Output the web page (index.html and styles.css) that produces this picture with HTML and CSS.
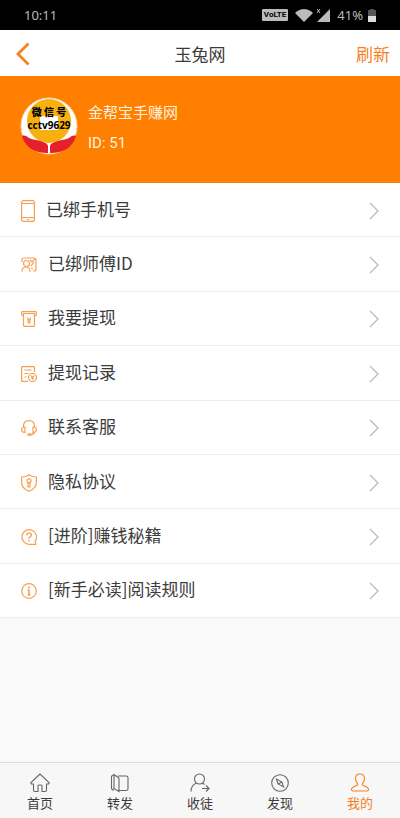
FILE: index.html
```html
<!DOCTYPE html>
<html lang="zh-CN">
<head>
<meta charset="utf-8">
<meta name="viewport" content="width=device-width, initial-scale=1">
<title>玉兔网</title>
<link rel="stylesheet" href="styles.css">
</head>
<body>
<div class="status">
  <span class="clock">10:11</span>
  <span class="volte">VoLTE</span>
  <svg class="wifi" width="18" height="13" viewBox="0 0 18 13"><path fill="currentColor" d="M0 4Q9-4 18 4L9 13Z"/></svg>
  <svg class="signal" width="14" height="14" viewBox="0 0 14 14"><path fill="currentColor" d="M14 1v13H1Z"/><path d="M1 1l3 4M4 1L1 5" fill="none" stroke="currentColor"/></svg>
  <span class="percent">41%</span>
  <svg width="8" height="13" viewBox="0 0 8 13"><path fill="#555" d="M2 0h4v1h2v6H0V1h2Z"/><path fill="#ddd" d="M0 7h8v6H0Z"/></svg>
</div>
<header class="header">
  <button class="back" type="button" aria-label="返回"><svg width="14" height="24" viewBox="0 0 14 24"><path d="M12.500 1.500L2 12l10.500 10.500" fill="none" stroke="currentColor" stroke-width="2.800"/></svg></button>
  <h1 class="title">玉兔网</h1>
  <button class="refresh" type="button">刷新</button>
</header>
<main class="main">
  <section class="profile">
    <svg class="avatar" width="58" height="58" viewBox="0 0 58 58">
      <circle cx="29" cy="29" r="28" fill="#fff" stroke="#ffd9ae"/>
      <circle cx="29" cy="24" r="22" fill="#f8b00c"/>
      <path fill="#fff" d="M20 19h18v14H20Z"/>
      <path fill="#e3202b" d="M2 39c2-1 5 0 7 2 4 2 10 2 14 4 2 1 4 1 5 4v7C14 56 5 50 2 39ZM56 39c-2-1-5 0-7 2-4 2-10 2-14 4-2 1-4 1-5 4v7c14 0 23-6 26-17Z"/>
      <text class="stamp" x="29" y="19" text-anchor="middle">微 信 号</text>
      <text class="wechat" x="29" y="32" text-anchor="middle">cctv9629</text>
    </svg>
    <div class="who">
      <p class="name">金帮宝手赚网</p>
      <p class="uid">ID: 51</p>
    </div>
  </section>
  <nav class="menu" aria-label="菜单">
    <a class="row" href="#phone"><svg class="icon" width="14" height="22" viewBox="0 0 14 22"><rect x=".6" y=".6" width="12.800" height="20.800" rx="2"/><path d="M1 3.500h12M1 17.500h12M6 19.500h2"/></svg><span class="label">已绑手机号</span><svg class="arrow" width="10" height="18" viewBox="0 0 10 18"><path d="M1 1l8 8-8 8"/></svg></a>
    <a class="row" href="#master"><svg class="icon" width="16" height="16" viewBox="0 0 16 16"><path d="M1 5V3q0-2 2-2h10q2 0 2 2v9q0 2-2 2h-1M1 14.500c0-3 1.500-4.500 4-4.500s4 1.500 4 5M9 3l2 2 3-3M10 9l3-4M10 11l2 1"/><circle cx="5.500" cy="6.500" r="3"/></svg><span class="label">已绑师傅ID</span><svg class="arrow" width="10" height="18" viewBox="0 0 10 18"><path d="M1 1l8 8-8 8"/></svg></a>
    <a class="row" href="#withdraw"><svg class="icon" width="16" height="16" viewBox="0 0 16 16"><path d="M2.500 4.500H1.500Q.6 4.500.6 3.500v-2Q.6.600 1.500.600h13q.9 0 .9.900v2q0 1-.9 1h-1M2.500 2.500h11v12q0 .9-.9.900H3.400q-.9 0-.9-.9ZM6 6.500l2 2.500 2-2.500M8 9v4M6 9h4M6 11h4"/></svg><span class="label">我要提现</span><svg class="arrow" width="10" height="18" viewBox="0 0 10 18"><path d="M1 1l8 8-8 8"/></svg></a>
    <a class="row" href="#records"><svg class="icon" width="16" height="16" viewBox="0 0 16 16"><path d="M13.500 6V1.500Q13.500.600 12.500.600h-11Q.6.600.6 1.500v13q0 .9.900.9H7M3.500 4h7M3.500 7.500h4M3.500 11h2"/><circle cx="11.500" cy="11.500" r="4"/><path d="M10 9.500l1.500 2 1.500-2M11.500 11.500v2.500M10 12h3"/></svg><span class="label">提现记录</span><svg class="arrow" width="10" height="18" viewBox="0 0 10 18"><path d="M1 1l8 8-8 8"/></svg></a>
    <a class="row" href="#service"><svg class="icon" width="16" height="16" viewBox="0 0 16 16"><path d="M2.500 7V6C2.500 2.500 5 .600 8 .600S13.500 2.500 13.500 6v1M4 7v5.500C2 12.500.6 11.500.6 9.800S2 7 4 7ZM12 7v5.500c2 0 3.400-1 3.400-2.700S14 7 12 7ZM13.500 12c-.5 1.800-2 2.500-3.500 2.500"/><ellipse cx="8.500" cy="14.500" rx="1.700" ry=".9"/></svg><span class="label">联系客服</span><svg class="arrow" width="10" height="18" viewBox="0 0 10 18"><path d="M1 1l8 8-8 8"/></svg></a>
    <a class="row" href="#privacy"><svg class="icon" width="16" height="18" viewBox="0 0 16 18"><path d="M8 .700C6 2.300 3.500 3 .700 3v6c0 4 3 6.500 7.300 8.300C12.300 15.500 15.300 13 15.300 9V3C12.500 3 10 2.300 8 .700ZM7 8.500h2v4.500H7Z"/><circle cx="8" cy="6.800" r="2"/></svg><span class="label">隐私协议</span><svg class="arrow" width="10" height="18" viewBox="0 0 10 18"><path d="M1 1l8 8-8 8"/></svg></a>
    <a class="row" href="#tips"><svg class="icon" width="16" height="16" viewBox="0 0 16 16"><path d="M14 12.500A7.300 7.300 0 1 0 8 15.300h6.500q.8 0 .4-.7Z"/><path d="M5.800 6.200C5.800 3 10.300 3.200 10.300 6c0 1.800-2.300 1.800-2.300 3.700M8 11v1.400" stroke-width="1.400"/></svg><span class="label">[进阶]赚钱秘籍</span><svg class="arrow" width="10" height="18" viewBox="0 0 10 18"><path d="M1 1l8 8-8 8"/></svg></a>
    <a class="row" href="#rules"><svg class="icon" width="16" height="16" viewBox="0 0 16 16"><circle cx="8" cy="8" r="7.300"/><path d="M8 3.500v2M6.500 7.200H8V12M6.500 12h3" stroke-width="1.500"/></svg><span class="label">[新手必读]阅读规则</span><svg class="arrow" width="10" height="18" viewBox="0 0 10 18"><path d="M1 1l8 8-8 8"/></svg></a>
  </nav>
</main>
<nav class="tabs" aria-label="主导航">
  <a class="tab" href="#home"><svg width="20" height="20" viewBox="0 0 20 20"><path d="M10 1L1 9.500q-.5 1.500 1 1.500h1.500v6q0 1.500 1.500 1.500h3V13q0-1 1-1h2q1 0 1 1v5.500h3q1.500 0 1.500-1.500v-6H18q1.500 0 1-1.500Z"/></svg>首页</a>
  <a class="tab" href="#share"><svg width="20" height="20" viewBox="0 0 20 20"><path d="M8 3h8q2 0 2 2v11q0 1.500-2 1.500H9M9 5v13.500L4 15.500V1.500L9 5M4 2Q1.500 2 1.500 4v11q0 2 2.500 2"/></svg>转发</a>
  <a class="tab" href="#invite"><svg width="20" height="20" viewBox="0 0 20 20"><circle cx="9.500" cy="6" r="5"/><path d="M1 18.500c0-4 2-7 5.500-8.500M12.500 10l2 1.500M12 15.500h7M16 12.500l3 3-3 3"/></svg>收徒</a>
  <a class="tab" href="#discover"><svg width="20" height="20" viewBox="0 0 20 20"><circle cx="10" cy="10" r="8.300"/><path d="M6.500 6L8 11l5.500 3L12 9ZM8 11l4-2"/></svg>发现</a>
  <a class="tab active" href="#mine" aria-current="page"><svg width="20" height="20" viewBox="0 0 20 20"><path d="M10 1C7 1 5.500 3 5.500 5.500c0 2.500 1 3.500 2 5 .5 1.500-.5 2-2 2.500-3 1-4 1.800-4 3.500Q1.500 18 3 18h14q1.500 0 1.500-1.500c0-1.700-1-2.500-4-3.500-1.500-.5-2.500-1-2-2.500 1-1.500 2-2.500 2-5C14.500 3 13 1 10 1Z"/></svg>我的</a>
</nav>
</body>
</html>
```
FILE: styles.css
```css
* { box-sizing: border-box; }
body {
  margin: 0;
  min-height: 100vh;
  display: flex;
  flex-direction: column;
  background: #f9f9f9;
  color: #3c3c3c;
  font: 17px/24px "Noto Sans CJK SC", sans-serif;
}
h1, p { margin: 0; }
a { color: inherit; text-decoration: none; }
button { border: 0; padding: 0; background: none; color: #f5821f; font: inherit; }
svg { display: block; flex: none; }

.status {
  display: flex;
  align-items: center;
  height: 30px;
  padding: 0 24px;
  background: #000;
  color: #bbb;
  font: 13px/16px "Noto Sans", sans-serif;
}
.clock { flex: 1; }
.volte {
  padding: 0 2px;
  margin-right: 7px;
  border-radius: 1px;
  background: #bbb;
  color: #000;
  font: bold 8px/12px Roboto, sans-serif;
}
.wifi { margin-right: 3px; }
.signal { margin-right: 7px; }
.percent { margin-right: 5px; }

.header {
  display: grid;
  grid-template-columns: 1fr auto 1fr;
  align-items: center;
  height: 46px;
  padding: 2px 10px 0;
  background: #fff;
}
.back { justify-self: start; margin-left: 6px; }
.title { font-size: 17px; line-height: 24px; font-weight: 400; }
.refresh { justify-self: end; }

.main { flex: 1; }
.profile {
  display: flex;
  align-items: center;
  gap: 10px;
  height: 107px;
  padding: 0 20px 8px;
  background: #ff8000;
  color: #fff0df;
  font-size: 15px;
}
.who { display: grid; gap: 7px; padding-top: 4px; }
.uid { font-family: Roboto, sans-serif; }
.stamp { font: 900 10px "Noto Sans CJK SC", sans-serif; }
.wechat { font: bold 10px "Open Sans", sans-serif; }

.menu {
  display: grid;
  grid-auto-rows: 1fr;
  min-height: 435px;
  background: #fff;
}
.row {
  display: flex;
  align-items: center;
  gap: 11px;
  padding: 0 21px;
  border-bottom: 1px solid #eee;
}
.label { flex: 1; padding-bottom: 2px; }
.icon { margin-top: 2px; fill: none; stroke: #f4a051; stroke-width: 1.200; }
.arrow { margin-top: 2px; fill: none; stroke: #bbb; stroke-width: 1.300; }

.tabs {
  display: grid;
  grid-template-columns: repeat(5, 1fr);
  height: 56px;
  border-top: 1px solid #ddd;
  background: #f7f7f7;
}
.tab {
  display: flex;
  flex-direction: column;
  align-items: center;
  padding-top: 10px;
  font-size: 13px;
  line-height: 20px;
}
.tab svg { fill: none; stroke: #666; stroke-width: 1.100; }
.active { color: #f5821f; }
.active svg { stroke: #f5821f; }
```
